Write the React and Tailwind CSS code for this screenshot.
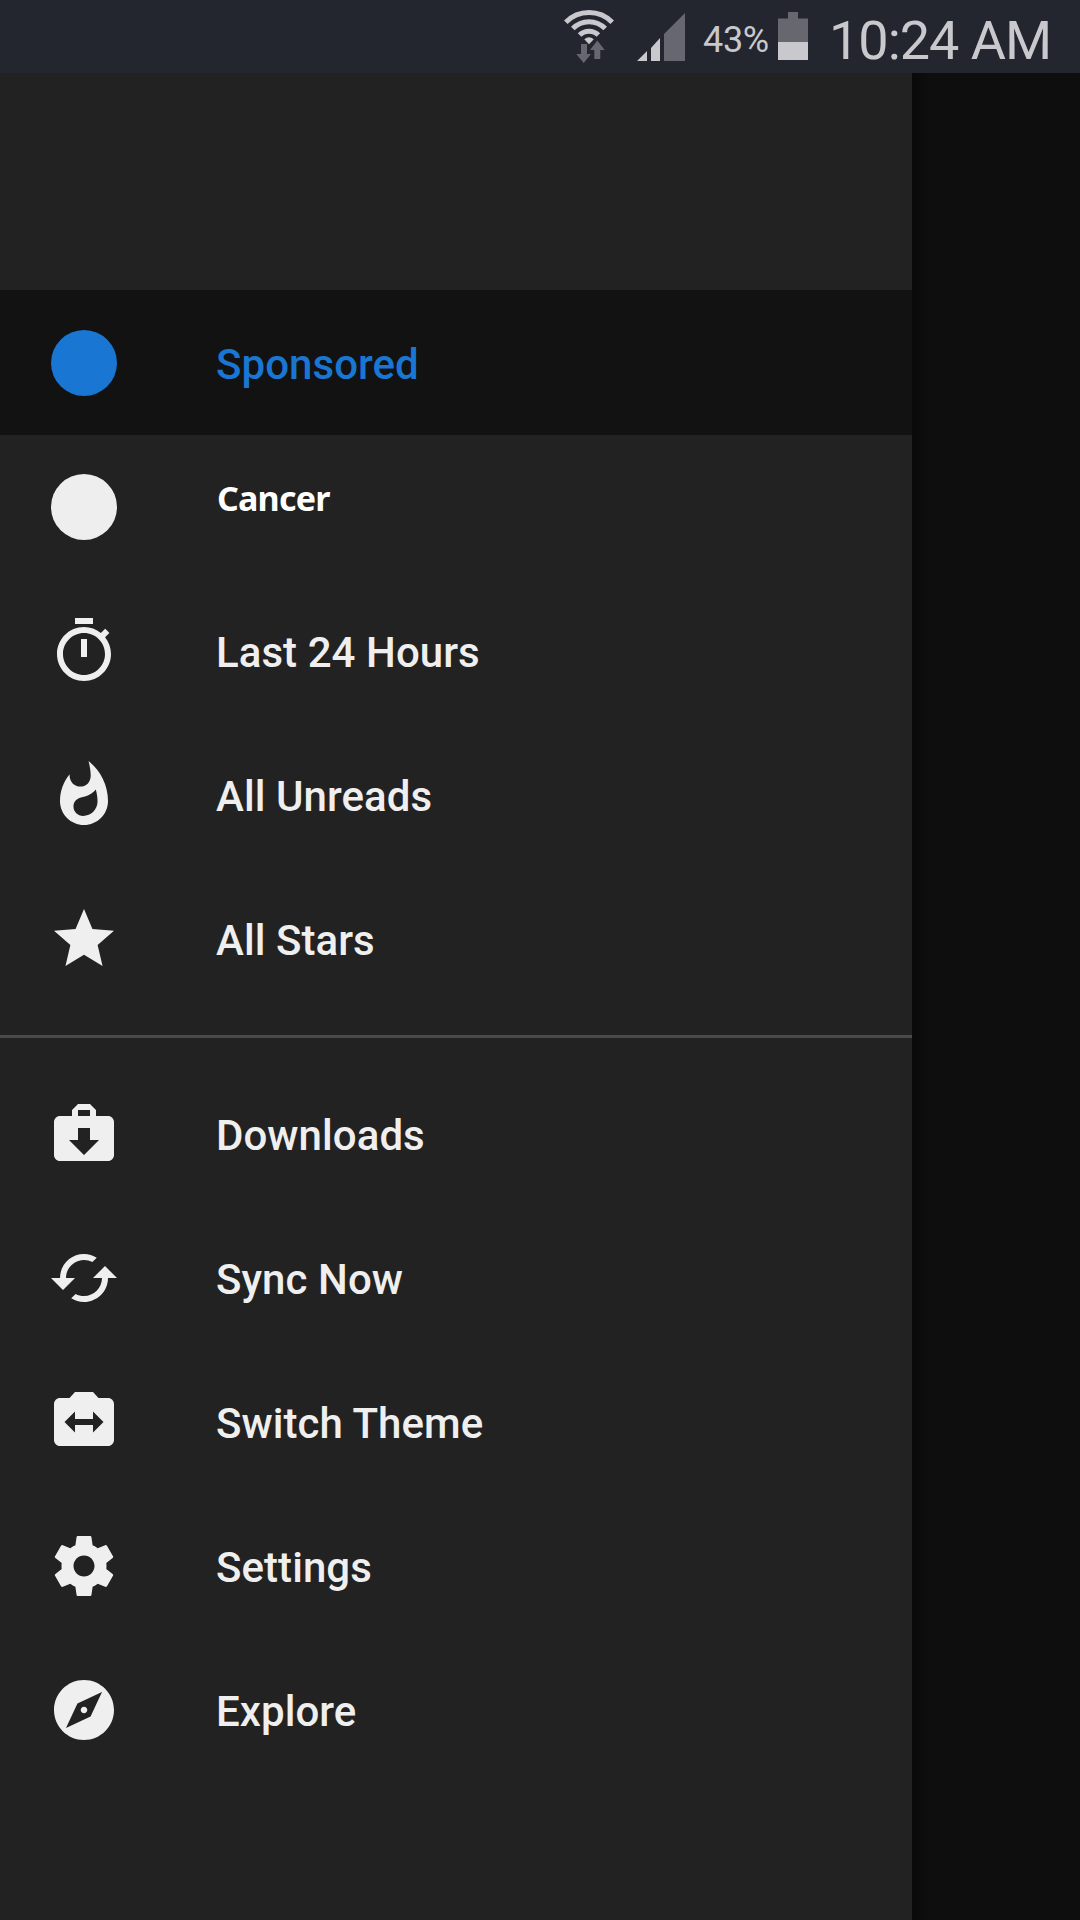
const INK = '#EFEFEF';

const ICONS = {
  timer:
    'M15 1H9v2h6V1zm-4 13h2V8h-2v6zm8.03-6.61l1.42-1.42c-.43-.51-.9-.99-1.41-1.41l-1.42 1.42C16.07 4.74 14.12 4 12 4c-4.97 0-9 4.03-9 9s4.02 9 9 9 9-4.03 9-9c0-2.12-.74-4.07-1.97-5.61zM12 20c-3.87 0-7-3.13-7-7s3.13-7 7-7 7 3.13 7 7-3.13 7-7 7z',
  flame:
    'M13.5.67s.74 2.65.74 4.8c0 2.06-1.35 3.73-3.41 3.73-2.07 0-3.63-1.67-3.63-3.73l.03-.36C5.21 7.51 4 10.62 4 14c0 4.42 3.58 8 8 8s8-3.58 8-8C20 8.61 17.41 3.8 13.5.67zM11.71 19c-1.78 0-3.22-1.4-3.22-3.14 0-1.62 1.05-2.76 2.81-3.12 1.77-.36 3.6-1.21 4.62-2.58.39 1.29.59 2.65.59 4.04 0 2.65-2.15 4.8-4.8 4.8z',
  star: 'M12 17.27L18.18 21l-1.64-7.03L22 9.24l-7.19-.61L12 2 9.19 8.63 2 9.24l5.46 4.73L5.82 21z',
  downloads:
    'M20 6h-4V4l-2-2h-4L8 4v2H4c-1.1 0-2 .9-2 2v11c0 1.1.9 2 2 2h16c1.1 0 2-.9 2-2V8c0-1.1-.9-2-2-2zM10 4h4v2h-4V4zm2 15l-5-5h3v-4h4v4h3l-5 5z',
  sync:
    'M19 8l-4 4h3c0 3.31-2.69 6-6 6-1.01 0-1.97-.25-2.8-.7l-1.46 1.46C8.97 19.54 10.43 20 12 20c4.42 0 8-3.58 8-8h3l-4-4zM6 12c0-3.31 2.69-6 6-6 1.01 0 1.97.25 2.8.7l1.46-1.46C15.03 4.46 13.57 4 12 4c-4.42 0-8 3.58-8 8H1l4 4 4-4H6z',
  theme:
    'M20 4h-3.17L15 2H9L7.17 4H4c-1.1 0-2 .9-2 2v12c0 1.1.9 2 2 2h16c1.1 0 2-.9 2-2V6c0-1.1-.9-2-2-2zm-5 11.5V13H9v2.5L5.5 12 9 8.5V11h6V8.5l3.5 3.5-3.5 3.5z',
  settings:
    'M19.43 12.98c.04-.32.07-.64.07-.98s-.03-.66-.07-.98l2.11-1.65c.19-.15.24-.42.12-.64l-2-3.46c-.12-.22-.39-.3-.61-.22l-2.49 1c-.52-.4-1.08-.73-1.69-.98l-.38-2.65C14.46 2.18 14.25 2 14 2h-4c-.25 0-.46.18-.49.42l-.38 2.65c-.61.25-1.17.59-1.69.98l-2.49-1c-.23-.09-.49 0-.61.22l-2 3.46c-.13.22-.07.49.12.64l2.11 1.65c-.04.32-.07.65-.07.98s.03.66.07.98l-2.11 1.65c-.19.15-.24.42-.12.64l2 3.46c.12.22.39.3.61.22l2.49-1c.52.4 1.08.73 1.69.98l.38 2.65c.03.24.24.42.49.42h4c.25 0 .46-.18.49-.42l.38-2.65c.61-.25 1.17-.59 1.69-.98l2.49 1c.23.09.49 0 .61-.22l2-3.46c.12-.22.07-.49-.12-.64l-2.11-1.65zM12 15.5c-1.93 0-3.5-1.57-3.5-3.5s1.57-3.5 3.5-3.5 3.5 1.57 3.5 3.5-1.57 3.5-3.5 3.5z',
  explore:
    'M12 10.9c-.61 0-1.1.49-1.1 1.1s.49 1.1 1.1 1.1c.61 0 1.1-.49 1.1-1.1s-.49-1.1-1.1-1.1zM12 2C6.48 2 2 6.48 2 12s4.48 10 10 10 10-4.48 10-10S17.52 2 12 2zm2.19 12.19L6 18l3.81-8.19L18 6l-3.81 8.19z',
};

const FEEDS = [
  { label: 'Sponsored', dot: true, active: true },
  { label: 'Cancer', dot: true, custom: true },
  { label: 'Last 24 Hours', icon: 'timer' },
  { label: 'All Unreads', icon: 'flame' },
  { label: 'All Stars', icon: 'star' },
];

const ACTIONS = [
  { label: 'Downloads', icon: 'downloads' },
  { label: 'Sync Now', icon: 'sync' },
  { label: 'Switch Theme', icon: 'theme' },
  { label: 'Settings', icon: 'settings' },
  { label: 'Explore', icon: 'explore' },
];

function WifiIcon() {
  return (
    <svg width="52" height="60" viewBox="563 8 52 60" className="shrink-0">
      <g fill="none" stroke="#C8C8CD" strokeWidth="5">
        <path d="M565.8 22.2A32.6 32.6 0 0 1 612.2 22.2" />
        <path d="M572.8 28.6A22.4 22.4 0 0 1 605.2 28.6" />
        <path d="M579.6 35A13.4 13.4 0 0 1 598.4 35" />
      </g>
      <path d="M584.3 39.3Q589 35 593.8 39.3L589 44.3Z" fill="#C8C8CD" />
      <path
        d="M581 44h6v10h4L583.7 63 576.3 54H581zM597.3 40.5L604.7 50h-4.4v9h-6v-9H590z"
        fill="#67676F"
      />
    </svg>
  );
}

function SignalIcon() {
  return (
    <svg width="49" height="49" viewBox="0 0 49 49" className="shrink-0">
      <path d="M0 48L10 38V48zM14 48V35L23 25V48z" fill="#C8C8CD" />
      <path d="M27 48V21L48 0V48z" fill="#67676F" />
    </svg>
  );
}

function BatteryIcon() {
  return (
    <svg width="30" height="48" viewBox="0 0 30 48" className="shrink-0">
      <path d="M10 0h10v6.5h10V30H0V6.5h10z" fill="#67676F" />
      <path d="M0 30h30v18H0z" fill="#C8C8CD" />
    </svg>
  );
}

function StatusBar() {
  return (
    <header className="flex h-[73px] w-full items-start bg-[#23252F] pl-[563px] text-[#C8C8CD]">
      <div className="pt-2">
        <WifiIcon />
      </div>
      <div className="ml-[22px] pt-[13px]">
        <SignalIcon />
      </div>
      <span className="ml-[17px] w-[66px] whitespace-nowrap pt-[19px] text-[36px] leading-[42px] tracking-[-0.3px]">
        43%
      </span>
      <div className="ml-[9px] pt-3">
        <BatteryIcon />
      </div>
      <span className="ml-[21px] whitespace-nowrap pt-[9px] text-[54px] leading-[64px] tracking-[-1px]">
        10:24 AM
      </span>
    </header>
  );
}

function DrawerItem({ label, icon, dot, active, custom }) {
  return (
    <li
      className={`flex items-center pl-12 ${
        active ? '-mt-px h-[145px] bg-[#121212] pt-px text-[#1976D2]' : 'h-36 text-[#EFEFEF]'
      }`}
    >
      <span className="flex size-[72px] shrink-0 items-center justify-center">
        {dot ? (
          <span className={`size-[66px] rounded-full ${active ? 'bg-[#1976D2]' : 'bg-[#EEEEEE]'}`} />
        ) : (
          <svg viewBox="0 0 24 24" className="size-[72px]" fill={INK}>
            <path d={ICONS[icon]} />
          </svg>
        )}
      </span>
      {custom ? (
        <span className="ml-[97px] pb-[18px] font-['Noto_Sans',sans-serif] text-[34px] font-bold leading-[48px] tracking-[-0.8px] text-white">
          {label}
        </span>
      ) : (
        <span className="ml-24 pt-1 text-[42px] font-medium leading-[50px] tracking-[0.06px]">{label}</span>
      )}
    </li>
  );
}

export default function App() {
  return (
    <div className="flex h-[1920px] w-[1080px] flex-col overflow-hidden bg-[#0E0E0E] font-[Roboto,sans-serif]">
      <StatusBar />
      <div className="flex flex-1">
        <nav className="w-[912px] bg-[#222222] pt-[218px]">
          <ul>
            {FEEDS.map((item) => (
              <DrawerItem key={item.label} {...item} />
            ))}
          </ul>
          <div className="my-6 h-[3px] bg-[#4A4A4A]" />
          <ul>
            {ACTIONS.map((item) => (
              <DrawerItem key={item.label} {...item} />
            ))}
          </ul>
        </nav>
        {/* Scrim over the page behind the drawer */}
        <div className="w-[18px] bg-linear-to-r from-[#090909] to-[#0E0E0E]" />
      </div>
    </div>
  );
}
